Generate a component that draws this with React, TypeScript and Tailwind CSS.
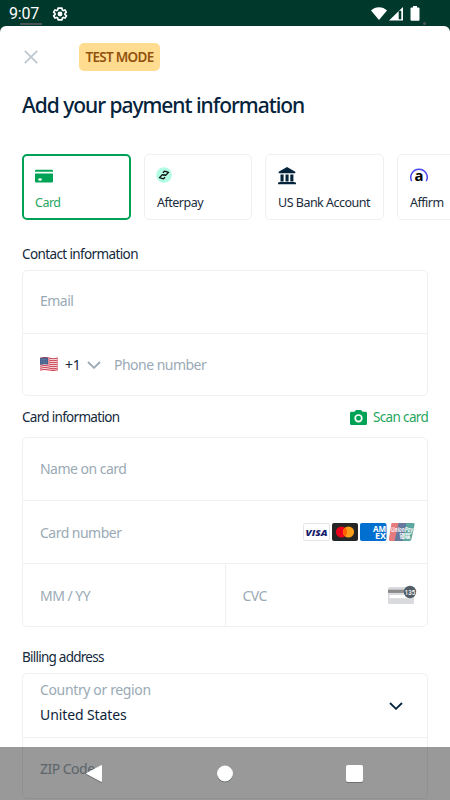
import React from "react";

interface FieldProps {
  label: string;
  labelClassName?: string;
  children?: React.ReactNode;
}

interface MethodProps {
  label: string;
  icon: React.ReactNode;
  className: string;
  textClassName?: string;
}

const StatusBar: React.FC = () => {
  return (
    <div className="h-[26px] shrink-0 flex items-center justify-between pl-[9px] pr-[30px] relative">
      <div className="flex items-center gap-[13px]">
        <span className="w-[30px] font-[Roboto] text-[16px] leading-[26px] tracking-[-0.2px] text-white pt-[2px]">9:07</span>
        <svg viewBox="0 0 24 24" className="w-4 h-4 mt-px" fill="none">
          <path
            d="M19.4 13a7.8 7.8 0 0 0 0-2l2.1-1.6-2-3.5-2.5 1a7.3 7.3 0 0 0-1.7-1L15 3.2h-6l-.4 2.7a7.3 7.3 0 0 0-1.7 1l-2.5-1-2 3.5L4.6 11a7.8 7.8 0 0 0 0 2l-2.1 1.6 2 3.5 2.5-1a7.3 7.3 0 0 0 1.7 1l.4 2.7h6l.4-2.7a7.3 7.3 0 0 0 1.7-1l2.5 1 2-3.5z"
            stroke="#fff"
            strokeWidth="2.4"
            strokeLinejoin="round"
          />
          <circle cx="12" cy="12" r="3.7" fill="#fff" />
        </svg>
      </div>
      <svg viewBox="0 0 50 16" className="w-[50px] h-4 mt-px">
        <path d="M1 4.5C5 0 13 0 17 4.5L9 14z" fill="#fff" />
        <path d="M19 14.5L33 1V14.5z" fill="#fff" />
        <path d="M28.7 4.8h2.6v8.5h-2.6z" fill="#00382b" />
        <path d="M43 0h4V1.5h1.5q1 0 1 1v11.2q0 1-1 1h-7q-1 0-1-1V2.5q0-1 1-1H43z" fill="#fff" />
      </svg>
      <div className="absolute left-5 top-[23px] w-[22px] h-[2px] bg-[#4a5358]" />
      <div className="absolute left-[423px] top-[22px] w-[3px] h-[3px] rounded-full bg-[#4a5358]" />
    </div>
  );
};

const Chevron: React.FC<{ className: string }> = ({ className }) => (
  <svg viewBox="0 0 14 8" className={className} fill="none" stroke="currentColor">
    <path d="M1 1L7 6.8L13 1" strokeWidth="1.8" />
  </svg>
);

const CardIcon: React.FC = () => (
  <svg viewBox="0 0 18 14" className="w-[18px] h-[14px]" fill="#00a355">
    <path d="M0 2.7V2Q0 .8 1.2 .8h15.6Q18 .8 18 2v.7z" />
    <path d="M0 4.6h18v7.7Q18 13.6 16.8 13.6H1.2Q0 13.6 0 12.3z" />
    <ellipse cx="5" cy="10.5" rx="1.8" ry="1.3" fill="#fff" />
  </svg>
);

const AfterpayIcon: React.FC = () => (
  <svg viewBox="0 0 16 16" className="w-4 h-4 -ml-px mb-[2px]">
    <circle cx="8" cy="8" r="7.8" fill="#b2fce4" />
    {/* two interlocked links */}
    <g fill="none" stroke="#111" strokeWidth="1.3" strokeLinejoin="round" transform="rotate(-12 8 8)">
      <path d="M7.4 5.6L9.3 4.4L13 6.4L9.6 8.6L7.6 7.5" />
      <path d="M8.6 10.4L6.7 11.6L3 9.6L6.4 7.4L8.4 8.500" />
    </g>
  </svg>
);

const BankIcon: React.FC = () => (
  <svg viewBox="0 0 18 18" className="w-[18px] h-[18px]" fill="#04243b">
    <path d="M9 0l8.3 4.7v1.5H.7V4.7z" />
    <path d="M2.5 7.5h3.1v7H2.5zM7.5 7.5h3.1v7H7.5zM12.3 7.5h3.1v7h-3.1z" />
    <path d="M1.3 14.900h15.400v.7H18v1.700H0v-1.700h1.300z" />
  </svg>
);

const AffirmIcon: React.FC = () => (
  <svg viewBox="0 0 18 16" className="w-[18px] h-4 overflow-visible">
    <path d="M1.700 13.200A8.200 8.200 0 1 1 16.300 13.200" fill="none" stroke="#4a4af4" strokeWidth="1.500" />
    <text x="9" y="13.400" textAnchor="middle" className="font-['Noto_Sans'] text-[15px] font-bold" fill="#000">a</text>
  </svg>
);

const Flag: React.FC = () => (
  <svg viewBox="0 0 18 14" className="w-[18px] h-[14px]">
    <path d="M0 1Q5-.6 9 .7T18 .5V13Q13 14 9 13.1T0 13.3z" fill="#f4e7e9" />
    <g fill="none" stroke="#cf3f50" strokeWidth="1.050">
      <path d="M0 1.2Q5-.1 9 1.1T18 1" />
      <path d="M0 3.2Q5 1.9 9 3.1T18 3" />
      <path d="M0 5.2Q5 3.9 9 5.1T18 5" />
      <path d="M0 7.2Q5 5.9 9 7.1T18 7" />
      <path d="M0 9.2Q5 7.9 9 9.1T18 9" />
      <path d="M0 11.2Q5 9.9 9 11.1T18 11" />
      <path d="M0 13Q5 11.9 9 12.9T18 12.7" />
    </g>
    <path d="M0 1Q4 0 8 .6V7.5Q4 7 0 7.7z" fill="#46608e" />
    <path d="M1 2.5h6M1 4.2h6M1 6h6" stroke="#8d9db9" strokeWidth=".6" strokeDasharray=".8 .8" />
  </svg>
);

const CardBrands: React.FC = () => (
  <svg viewBox="0 0 112 18" className="w-28 h-[18px] overflow-visible">
    {/* Visa */}
    <rect x=".5" y=".5" width="26" height="17" rx="2" fill="#fff" stroke="#e1e5e9" />
    <text x="2.500" y="12.600" textLength="22" lengthAdjust="spacingAndGlyphs" className="font-['Open_Sans'] text-[9.500px] font-extrabold italic" fill="#171e6c">VISA</text>
    {/* Mastercard */}
    <rect x="29" width="26" height="18" rx="2" fill="#252525" />
    <circle cx="38.5" cy="9" r="5.6" fill="#eb001b" />
    <circle cx="45.5" cy="9" r="5.6" fill="#f79e1b" />
    <path d="M42 4.6a5.6 5.6 0 0 1 0 8.8a5.6 5.6 0 0 1 0-8.8z" fill="#ff5f00" />
    {/* American Express */}
    <rect x="57" width="26.5" height="18" rx="2" fill="#016fd0" />
    <text x="70" y="8.500" textLength="13.200" lengthAdjust="spacingAndGlyphs" className="font-['Noto_Sans'] text-[8px] font-bold" fill="#fff">AM</text>
    <text x="72" y="15.500" textLength="11.200" lengthAdjust="spacingAndGlyphs" className="font-['Noto_Sans'] text-[8px] font-bold" fill="#fff">EX</text>
    {/* UnionPay */}
    <path d="M88.5 0H96L92 18H87Q85.5 18 85.9 16z" fill="#e67a7c" />
    <path d="M95.5 0H104L100 18H91.500z" fill="#66799d" />
    <path d="M103.5 0H110.5Q112 0 111.6 1.7L108.5 16Q108 18 106.5 18H99.500z" fill="#5ea7a0" />
    <text x="88" y="9" textLength="22" lengthAdjust="spacingAndGlyphs" className="font-['Noto_Sans'] text-[7px] font-semibold italic" fill="#fff">UnionPay</text>
    <text x="96.500" y="15" textLength="11" lengthAdjust="spacingAndGlyphs" className="font-['Noto_Sans_CJK_SC'] text-[5.500px] font-bold" fill="#fff">银联</text>
  </svg>
);

const CvcIcon: React.FC = () => (
  <svg viewBox="0 0 30 20" className="w-[30px] h-5 overflow-visible">
    <rect x="1" y="2" width="26" height="17" rx="1.5" fill="#d8dadd" />
    <path d="M1 4.7h26v3.2H1z" fill="#8b8b8c" />
    <path d="M2.5 10h18.500v3.2H2.500z" fill="#fff" />
    <circle cx="23" cy="7" r="6.2" fill="#525d65" />
    <text x="17.800" y="10" textLength="10.400" lengthAdjust="spacingAndGlyphs" className="font-[Roboto] text-[8px] font-medium" fill="#fff">135</text>
  </svg>
);

const Method: React.FC<MethodProps> = ({ label, icon, className, textClassName = "text-[#1a2b3b]" }) => (
  <div className={`h-[66px] shrink-0 rounded-[5px] flex flex-col ${className}`}>
    <div className="h-[18px] flex items-center">{icon}</div>
    <span className={`mt-[9px] text-[12.500px] leading-[18px] tracking-[-0.5px] whitespace-nowrap ${textClassName}`}>{label}</span>
  </div>
);

const Field: React.FC<FieldProps> = ({ label, labelClassName = "", children }) => (
  <div className="flex-1 flex items-center justify-between pl-[17px] pr-3">
    <span className={`text-[14px] tracking-[-0.520px] text-[#9aaab5] ${labelClassName}`}>{label}</span>
    {children}
  </div>
);

export default function App() {
  return (
    <div className="relative w-[450px] h-[800px] overflow-hidden bg-[#00382b] font-['Noto_Sans',sans-serif] flex flex-col">
      <StatusBar />
      <main className="h-[774px] shrink-0 bg-white rounded-t-[6px] px-[22px] flex flex-col">
        <div className="mt-[17px] h-7 flex items-center">
          <svg viewBox="0 0 14 14" className="w-[14px] h-[14px] ml-[2px]" stroke="#c0c9d0" strokeWidth="1.9">
            <path d="M.8 .8L13.2 13.2M13.2 .8L.8 13.2" />
          </svg>
          <span className="ml-[41px] w-[81px] h-7 rounded-[5px] bg-[#ffdc8f] text-[#91520e] text-[13.500px] font-semibold tracking-[-0.7px] leading-7 text-center whitespace-nowrap">
            TEST MODE
          </span>
        </div>
        <h1 className="mt-[19px] h-[30px] leading-[30px] text-[21px] font-medium tracking-[-1.030px] text-[#05233b] whitespace-nowrap">
          Add your payment information
        </h1>

        {/* Payment methods run off the right edge */}
        <div className="mt-[34px] -mr-[22px] flex gap-[13px] overflow-hidden shrink-0">
          <Method label="Card" icon={<CardIcon />} className="w-[109px] border-2 border-[#00a355] pl-[11px] pt-[11px]" textClassName="text-[#1fa660]" />
          <Method label="Afterpay" icon={<AfterpayIcon />} className="w-[108px] border border-[#edf1f4] pl-3 pt-3" />
          <Method label="US Bank Account" icon={<BankIcon />} className="w-[119px] border border-[#edf1f4] pl-3 pt-3" />
          <Method label="Affirm" icon={<AffirmIcon />} className="w-[108px] border border-[#edf1f4] pl-3 pt-3" />
        </div>

        <h2 className="mt-6 h-5 leading-5 text-[13.500px] tracking-[-0.620px] text-[#14293b]">Contact information</h2>
        <div className="mt-[6px] h-[126px] shrink-0 w-[406px] border border-[#edf1f4] rounded-[5px] flex flex-col divide-y divide-[#edf1f4]">
          <Field label="Email" labelClassName="-mt-[2px]" />
          <div className="flex-1 flex items-center pl-[17px]">
            <Flag />
            <span className="ml-[7px] w-[17px] text-[14px] tracking-[-0.3px] text-[#14293b]">+1</span>
            <Chevron className="ml-[5px] mt-[2px] w-[14px] h-2 text-[#9aaab5]" />
            <span className="ml-[13px] text-[14px] tracking-[-0.520px] text-[#9aaab5]">Phone number</span>
          </div>
        </div>

        <div className="mt-[11px] h-5 flex items-center justify-between">
          <h2 className="leading-5 text-[13.500px] tracking-[-0.7px] text-[#14293b]">Card information</h2>
          <div className="flex items-center gap-[6px] text-[#1fa660]">
            <svg viewBox="0 0 17 15" className="w-[17px] h-[15px]">
              <path d="M1.5 1.8H4.5L6 0h5l1.5 1.8h3Q17 1.8 17 3.2V13.5Q17 15 15.5 15h-14Q0 15 0 13.5V3.2Q0 1.8 1.5 1.8z" fill="#00a355" />
              <circle cx="8.5" cy="8.3" r="3.3" fill="none" stroke="#fff" strokeWidth="1.7" />
            </svg>
            <span className="w-[55px] text-[13.500px] leading-5 tracking-[-0.650px] whitespace-nowrap">Scan card</span>
          </div>
        </div>
        <div className="mt-[10px] h-[190px] shrink-0 w-[406px] border border-[#edf1f4] rounded-[5px] flex flex-col divide-y divide-[#edf1f4]">
          <Field label="Name on card" labelClassName="-mt-px" />
          <Field label="Card number">
            <CardBrands />
          </Field>
          <div className="flex-1 flex divide-x divide-[#edf1f4]">
            <Field label="MM / YY" labelClassName="tracking-[-0.300px]" />
            <Field label="CVC">
              <div className="-mr-[2px]">
                <CvcIcon />
              </div>
            </Field>
          </div>
        </div>

        <h2 className="mt-5 h-5 leading-5 text-[13.500px] tracking-[-0.750px] text-[#14293b]">Billing address</h2>
        <div className="mt-[6px] h-[126px] shrink-0 w-[406px] border border-[#edf1f4] rounded-[5px] flex flex-col divide-y divide-[#edf1f4]">
          <div className="h-16 shrink-0 flex items-center justify-between pl-[17px] pr-6">
            <div className="flex flex-col -mt-2">
              <span className="text-[14px] leading-[25px] tracking-[-0.360px] text-[#9aaab5]">Country or region</span>
              <span className="text-[14px] leading-[25px] tracking-[-0.1px] text-[#0e2438]">United States</span>
            </div>
            <Chevron className="w-[14px] h-2 text-[#04243b]" />
          </div>
          <Field label="ZIP Code" />
        </div>
      </main>

      {/* System navigation sits over the scrolling sheet */}
      <nav className="absolute inset-x-0 bottom-0 h-[53px] bg-black/40">
        <svg viewBox="0 0 450 53" className="w-full h-full drop-shadow-[0_1px_0_rgba(60,70,80,0.5)]" fill="#fff" stroke="#fff" strokeLinejoin="round">
          <path d="M86.5 26.5L101.5 18.5V34.500z" />
          <circle cx="225" cy="26.5" r="7.5" />
          <rect x="346.5" y="18.5" width="16" height="16" rx="1" />
        </svg>
      </nav>
    </div>
  );
}
